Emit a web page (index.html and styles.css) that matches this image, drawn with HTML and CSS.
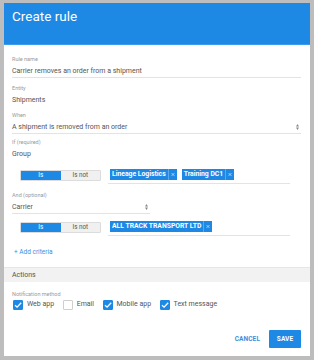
FILE: index.html
```html
<!DOCTYPE html>
<html>
<head>
<meta charset="utf-8">
<link rel="stylesheet" href="styles.css">
</head>
<body>
<div class="dialog">
  <div class="header"><h1 class="title">Create rule</h1></div>
  <div class="content">
    <div class="field f-rule">
      <div class="label">Rule name</div>
      <div class="value underline">Carrier removes an order from a shipment</div>
    </div>
    <div class="field f-entity">
      <div class="label">Entity</div>
      <div class="value">Shipments</div>
    </div>
    <div class="field f-when">
      <div class="label">When</div>
      <div class="value underline select">A shipment is removed from an order<span class="caret"><svg width="3" height="6" viewBox="0 0 3 6"><path d="M0 2.5L1.5 0L3 2.5Z M0 3.5L1.5 6L3 3.5Z" fill="#888"/></svg></span></div>
    </div>
    <div class="field f-if">
      <div class="label">If (required)</div>
      <div class="value">Group</div>
    </div>
    <div class="crit-row r1">
      <div class="toggle"><span class="tg on">Is</span><span class="tg off">Is not</span></div>
      <div class="chips">
        <span class="chip"><span class="chip-text">Lineage Logistics</span><span class="chip-x"><svg width="8" height="11" viewBox="0 0 8 11"><path d="M2.6 4.1L5.4 6.9M5.4 4.1L2.6 6.9" stroke="#dbeafb" stroke-width="0.7"/></svg></span></span>
        <span class="chip"><span class="chip-text">Training DC1</span><span class="chip-x"><svg width="8" height="11" viewBox="0 0 8 11"><path d="M2.6 4.1L5.4 6.9M5.4 4.1L2.6 6.9" stroke="#dbeafb" stroke-width="0.7"/></svg></span></span>
      </div>
    </div>
    <div class="field f-and">
      <div class="label">And (optional)</div>
      <div class="value underline select narrow">Carrier<span class="caret"><svg width="3" height="6" viewBox="0 0 3 6"><path d="M0 2.5L1.5 0L3 2.5Z M0 3.5L1.5 6L3 3.5Z" fill="#888"/></svg></span></div>
    </div>
    <div class="crit-row r2">
      <div class="toggle"><span class="tg on">Is</span><span class="tg off">Is not</span></div>
      <div class="chips">
        <span class="chip"><span class="chip-text">ALL TRACK TRANSPORT LTD</span><span class="chip-x"><svg width="8" height="11" viewBox="0 0 8 11"><path d="M2.6 4.1L5.4 6.9M5.4 4.1L2.6 6.9" stroke="#dbeafb" stroke-width="0.7"/></svg></span></span>
      </div>
    </div>
    <div class="add">+ Add criteria</div>
  </div>
  <div class="section-bar">Actions</div>
  <div class="content actions">
    <div class="label nm">Notification method</div>
    <div class="checks">
      <label class="check"><span class="box checked"><svg width="10" height="10" viewBox="0 0 10 10"><path d="M2 5.2L4.1 7.2L8.2 2.8" fill="none" stroke="#fff" stroke-width="1.3"/></svg></span>Web app</label>
      <label class="check"><span class="box"></span>Email</label>
      <label class="check"><span class="box checked"><svg width="10" height="10" viewBox="0 0 10 10"><path d="M2 5.2L4.1 7.2L8.2 2.8" fill="none" stroke="#fff" stroke-width="1.3"/></svg></span>Mobile app</label>
      <label class="check"><span class="box checked"><svg width="10" height="10" viewBox="0 0 10 10"><path d="M2 5.2L4.1 7.2L8.2 2.8" fill="none" stroke="#fff" stroke-width="1.3"/></svg></span>Text message</label>
    </div>
    <div class="buttons">
      <span class="btn cancel">CANCEL</span>
      <span class="btn save">SAVE</span>
    </div>
  </div>
</div>
</body>
</html>
```
FILE: styles.css
```css
* { box-sizing: border-box; }
html, body { margin: 0; padding: 0; }
body {
  background: #bdbdbd;
  width: 314px;
  height: 360px;
  padding: 3px 4px 4px 4px;
  font-family: Roboto, "Liberation Sans", sans-serif;
}
.dialog {
  background: #fff;
  height: 353px;
  display: flex;
  flex-direction: column;
}
.header {
  background: #1e88e5;
  height: 42px;
  padding: 4px 8px 0;
  border-bottom: 1px solid #3d9bed;
}
.title {
  margin: 0;
  font-size: 13.5px;
  font-weight: 400;
  line-height: 18px;
  color: #fff;
}
.content {
  padding: 0 9px 0 8px;
}
.label {
  font-size: 5.5px;
  line-height: 11px;
  color: #9a9a9a;
}
.value {
  font-size: 7px;
  line-height: 12px;
  color: #555;
  display: flex;
  align-items: center;
  justify-content: space-between;
}
.underline { border-bottom: 1px solid #e3e3e3; }
.caret { display: flex; margin-right: 2px; }
.narrow { width: 138px; }
.f-rule { margin-top: 9px; }
.f-entity { margin-top: 5px; }
.f-when { margin-top: 4px; }
.f-if { margin-top: 3px; }
.f-and { margin-top: 6px; }
.crit-row {
  display: flex;
  align-items: flex-start;
  gap: 7px;
  margin-left: 8px;
  padding-right: 11px;
}
.r1 { margin-top: 10px; }
.r2 { margin-top: 8px; }
.toggle {
  display: flex;
  width: 81px;
  height: 11px;
  border-radius: 1px;
  overflow: hidden;
  border: 1px solid #dcdcdc;
  flex: none;
}
.tg {
  flex: 1;
  font-size: 6.3px;
  line-height: 9px;
  text-align: center;
}
.tg.on { background: #1e88e5; color: #fff; }
.tg.off { background: #f0f0f0; color: #555; }
.chips {
  flex: 1;
  display: flex;
  gap: 5px;
  margin-top: -1px;
  padding-left: 2px;
  border-bottom: 1px solid #e3e3e3;
  height: 15px;
  align-items: flex-start;
}
.chip {
  display: flex;
  background: #1e88e5;
  color: #fff;
  height: 11px;
  font-size: 6.8px;
  font-weight: 700;
  line-height: 11px;
}
.chip-text { padding: 0 2px; }
.chip-x {
  width: 9px;
  display: flex;
  justify-content: center;
  border-left: 1px solid #5aa9ee;
}
.add {
  margin-top: 10px;
  margin-left: 2px;
  font-size: 6.5px;
  line-height: 12px;
  color: #3a8fe0;
}
.section-bar {
  margin-top: 9px;
  height: 15px;
  background: #f2f2f2;
  border-top: 1px solid #e6e6e6;
  padding-left: 8px;
  font-size: 7px;
  line-height: 14px;
  color: #555;
}
.actions { flex: 1; display: flex; flex-direction: column; }
.nm { margin-top: 8px; line-height: 8px; }
.checks {
  display: flex;
  margin-left: 1px;
  margin-top: 1px;
}
.check {
  display: flex;
  align-items: center;
  font-size: 7px;
  color: #555;
  line-height: 11px;
  margin-right: 8.5px;
}
.box {
  width: 10px;
  height: 10px;
  border: 1px solid #cfcfcf;
  border-radius: 1px;
  margin-right: 4px;
  display: flex;
  background: #fff;
}
.box.checked { background: #1e88e5; border-color: #1e88e5; }
.box svg { margin: -1px; }
.buttons {
  margin-top: auto;
  margin-bottom: 8px;
  display: flex;
  justify-content: flex-end;
  align-items: center;
  gap: 9px;
}
.btn {
  font-size: 6.5px;
  font-weight: 700;
  letter-spacing: 0.1px;
}
.cancel { color: #3a8fe0; }
.save {
  background: #1e88e5;
  color: #fff;
  width: 32px;
  height: 18px;
  line-height: 18px;
  text-align: center;
  border-radius: 1px;
}
```
